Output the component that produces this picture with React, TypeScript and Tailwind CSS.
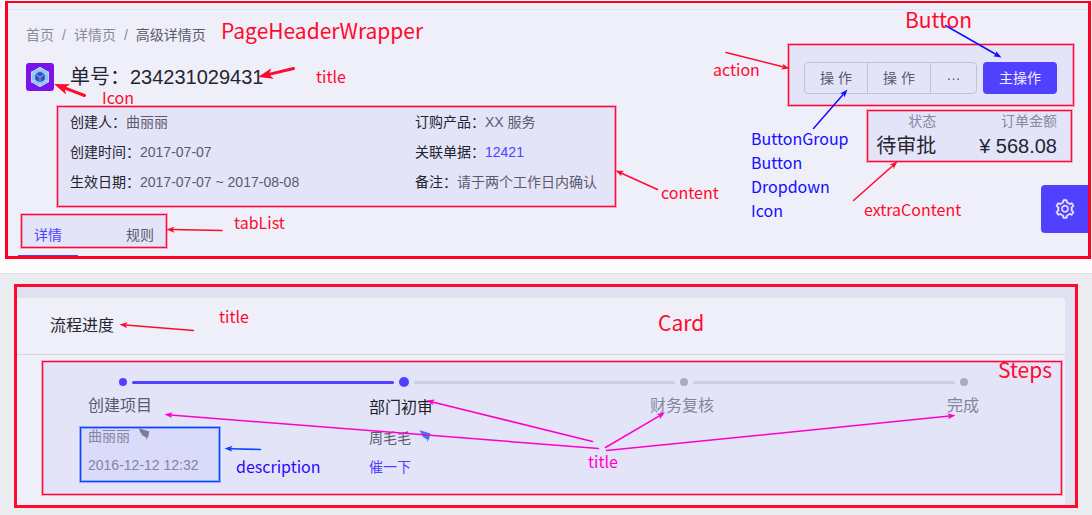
import React from "react";
import clsx from "clsx";

const RED = "#ff0a2d";
const BLUE = "#1010ff";
const PINK = "#ff00c8";

const redFrame =
  "border border-[#ff0a30] shadow-[0_0_0_1px_rgba(255,0,60,0.3),inset_0_0_0_1px_rgba(255,0,60,0.3)]";
const blueFrame =
  "border border-[#0a46ff] shadow-[0_0_0_1px_rgba(0,60,255,0.35),inset_0_0_0_1px_rgba(0,60,255,0.35)]";

type ArrowProps = {
  from: [number, number];
  to: [number, number];
  color: string;
  bold?: boolean;
};

function Arrow({ from, to, color, bold = false }: ArrowProps) {
  const dx = to[0] - from[0];
  const dy = to[1] - from[1];
  const len = Math.hypot(dx, dy);
  const ux = dx / len;
  const uy = dy / len;
  const head = bold ? 15 : 8;
  const half = bold ? 5.5 : 3;
  const notch = head * 0.75;
  const at = (back: number, side: number) =>
    `${to[0] - ux * back - uy * side},${to[1] - uy * back + ux * side}`;
  return (
    <g fill={color} stroke={color}>
      <line
        x1={from[0]}
        y1={from[1]}
        x2={to[0] - ux * notch}
        y2={to[1] - uy * notch}
        strokeWidth={bold ? 3 : 1.5}
        strokeLinecap="round"
      />
      <polygon
        points={[at(0, 0), at(head, half), at(notch, 0), at(head, -half)].join(" ")}
        stroke="none"
      />
    </g>
  );
}

const arrows: ArrowProps[] = [
  { from: [293.5, 68.5], to: [258, 77], color: RED, bold: true },
  { from: [84.5, 95.5], to: [54, 84], color: RED, bold: true },
  { from: [222, 230.5], to: [166.5, 229.5], color: RED },
  { from: [657.5, 189.5], to: [615.5, 170.5], color: RED },
  { from: [853.5, 200.5], to: [897.5, 161.5], color: RED },
  { from: [726, 52.5], to: [789.5, 68.5], color: RED },
  { from: [193.5, 330.5], to: [119.5, 324.5], color: RED },
  { from: [945.5, 25.5], to: [1001.5, 57.5], color: BLUE },
  { from: [813.5, 128.5], to: [847.5, 89.5], color: BLUE },
  { from: [260.5, 449.5], to: [224.5, 448.5], color: "#0a46ff" },
  { from: [592.5, 441.5], to: [426.5, 400.5], color: PINK },
  { from: [598.5, 448.5], to: [164.5, 414.5], color: PINK },
  { from: [605.5, 447.5], to: [665, 412.5], color: PINK },
  { from: [606.5, 450.5], to: [955.5, 415.5], color: PINK },
];

function Note({ className, children }: { className: string; children: React.ReactNode }) {
  return (
    <span
      className={clsx(
        "absolute whitespace-nowrap font-['Noto_Sans_CJK_SC',sans-serif]",
        className,
      )}
    >
      {children}
    </span>
  );
}

function Annotations() {
  return (
    <div className="pointer-events-none absolute inset-0 overflow-hidden">
      <svg className="absolute inset-0 h-full w-full" aria-hidden="true">
        {arrows.map((a, i) => (
          <Arrow key={i} {...a} />
        ))}
      </svg>
      <Note className="left-[221px] top-[14px] text-[21px] leading-8 text-[#ff0a2d]">PageHeaderWrapper</Note>
      <Note className="left-[905px] top-[3px] text-[21px] leading-8 text-[#ff0a2d]">Button</Note>
      <Note className="left-[658px] top-[306px] text-[21px] leading-8 text-[#ff0a2d]">Card</Note>
      <Note className="left-[998px] top-[353px] text-[21px] leading-8 text-[#ff0a2d]">Steps</Note>
      <Note className="left-[316px] top-[64px] text-base leading-6 text-[#ff0a2d]">title</Note>
      <Note className="left-[102px] top-[85px] text-base leading-6 text-[#ff0a2d]">Icon</Note>
      <Note className="left-[661px] top-[180px] text-base leading-6 text-[#ff0a2d]">content</Note>
      <Note className="left-[713px] top-[57px] text-base leading-6 text-[#ff0a2d]">action</Note>
      <Note className="left-[234px] top-[210px] text-base leading-6 text-[#ff0a2d]">tabList</Note>
      <Note className="left-[219px] top-[304px] text-base leading-6 text-[#ff0a2d]">title</Note>
      <Note className="left-[864px] top-[197px] text-base leading-6 text-[#ff0a2d]">extraContent</Note>
      <Note className="left-[236px] top-[454px] text-base leading-6 text-[#2a0aff]">description</Note>
      <Note className="left-[588px] top-[449px] text-base leading-6 text-[#ff00c8]">title</Note>
      <Note className="left-[751px] top-[126px] flex flex-col text-base leading-6 text-[#1010ff]">
        <span>ButtonGroup</span>
        <span>Button</span>
        <span>Dropdown</span>
        <span>Icon</span>
      </Note>
    </div>
  );
}

function Logo() {
  return (
    <svg className="size-7" viewBox="0 0 28 28" aria-hidden="true">
      <rect width="28" height="28" rx="3" fill="#7a14ea" />
      <polygon points="14,4 23,9 23,19 14,24 5,19 5,9" fill="#8cc4f6" />
      <path d="M14 4v5M5 9l5 2.5M23 9l-5 2.5M5 19l5-2.5M23 19l-5-2.5M14 24v-5" stroke="#b8dcfb" strokeWidth="1" />
      <polygon points="14,4.5 22.5,9.25 22.5,18.75 14,23.5 5.5,18.75 5.5,9.25" fill="none" stroke="#b4defc" strokeWidth="1" />
      <polygon points="14,8.5 18.8,11.2 18.8,16.8 14,19.5 9.2,16.8 9.2,11.2" fill="#3a4fc0" />
      <path d="M9.5 11.5L14 14l4.5-2.5M14 14v5" stroke="#8fc4f6" strokeWidth="0.8" fill="none" />
    </svg>
  );
}

function Gear() {
  return (
    <svg className="size-[22px]" viewBox="0 0 1024 1024" fill="currentColor" stroke="currentColor" strokeWidth="14" aria-hidden="true">
      <path d="M924.800 625.700l-65.500-56c3.100-19 4.700-38.400 4.700-57.800s-1.600-38.800-4.700-57.800l65.500-56a32.030 32.030 0 0 0 9.300-35.200l-.9-2.600a443.740 443.740 0 0 0-79.700-137.900l-1.800-2.100a32.120 32.120 0 0 0-35.100-9.500l-81.300 28.900c-30-24.600-63.500-44-99.700-57.600l-15.700-85a32.050 32.050 0 0 0-25.800-25.700l-2.700-.5c-52.100-9.400-106.900-9.400-159 0l-2.700.5a32.050 32.050 0 0 0-25.800 25.700l-15.800 85.400a351.860 351.860 0 0 0-99 57.400l-81.900-29.100a32 32 0 0 0-35.100 9.500l-1.800 2.100a446.020 446.020 0 0 0-79.700 137.900l-.9 2.600c-4.500 12.500-.8 26.500 9.300 35.200l66.300 56.600c-3.100 18.800-4.600 38-4.600 57.100 0 19.200 1.500 38.400 4.600 57.100L99 625.500a32.030 32.030 0 0 0-9.300 35.200l.9 2.600c18.100 50.400 44.900 96.900 79.700 137.900l1.800 2.100a32.120 32.120 0 0 0 35.100 9.500l81.900-29.100c29.800 24.500 63.100 43.900 99 57.400l15.800 85.400a32.050 32.050 0 0 0 25.800 25.700l2.700.5a449.400 449.400 0 0 0 159 0l2.700-.5a32.050 32.050 0 0 0 25.800-25.700l15.700-85a350 350 0 0 0 99.700-57.600l81.300 28.900a32 32 0 0 0 35.100-9.500l1.800-2.100c34.800-41.100 61.600-87.500 79.700-137.900l.9-2.600c4.500-12.300.8-26.300-9.300-35zM788.300 465.900c2.500 15.100 3.800 30.600 3.800 46.100s-1.300 31-3.800 46.100l-6.600 40.100 74.700 63.900a370.030 370.030 0 0 1-42.600 73.600L721 702.800l-31.400 25.800c-23.900 19.600-50.500 35-79.300 45.800l-38.100 14.300-17.900 97a377.500 377.500 0 0 1-85 0l-17.900-97.200-37.800-14.500c-28.500-10.800-55-26.200-78.700-45.700l-31.400-25.900-93.400 33.200c-17-22.900-31.200-47.600-42.600-73.600l75.500-64.500-6.500-40c-2.400-14.900-3.700-30.300-3.700-45.500 0-15.300 1.200-30.600 3.700-45.500l6.500-40-75.500-64.500c11.300-26.100 25.600-50.700 42.600-73.600l93.400 33.200 31.400-25.900c23.700-19.500 50.200-34.900 78.700-45.700l37.900-14.300 17.900-97.200c28.100-3.200 56.800-3.200 85 0l17.900 97 38.100 14.300c28.700 10.800 55.400 26.200 79.300 45.800l31.400 25.800 92.800-32.900c17 22.900 31.200 47.600 42.600 73.600L781.800 426l6.500 39.900zM512 326c-97.200 0-176 78.800-176 176s78.800 176 176 176 176-78.800 176-176-78.800-176-176-176zm79.200 255.200A111.600 111.600 0 0 1 512 614c-29.900 0-58-11.700-79.200-32.800A111.600 111.600 0 0 1 400 502c0-29.900 11.700-58 32.800-79.200C454 401.600 482.100 390 512 390c29.900 0 58 11.600 79.200 32.800A111.600 111.600 0 0 1 624 502c0 29.900-11.700 58-32.800 79.200z" />
    </svg>
  );
}

function Wing({ className }: { className: string }) {
  return (
    <svg className={clsx("h-3 w-3", className)} viewBox="0 0 12 12" fill="currentColor" aria-hidden="true">
      <path d="M0.800 0.300L10.800 3.200C11.500 3.500 11.500 4.200 11 5.200L10.200 7.200L11 7.600L8 12L8.300 9.300L6.500 8.900L6.800 8.200C5 8 4 7.300 3.400 6.200L4.200 5.900C2.800 5.300 2 4.300 1.700 3.200L2.400 3C1.500 2.400 0.900 1.500 0.800 0.300Z" />
    </svg>
  );
}

const facts: { label: string; value: string; link?: boolean }[] = [
  { label: "创建人", value: "曲丽丽" },
  { label: "订购产品", value: "XX 服务" },
  { label: "创建时间", value: "2017-07-07" },
  { label: "关联单据", value: "12421", link: true },
  { label: "生效日期", value: "2017-07-07 ~ 2017-08-08" },
  { label: "备注", value: "请于两个工作日内确认" },
];

function PageHeader() {
  return (
    <header className="border-b border-[#e0e0e3] bg-[#fcfcfc] pb-3.5 pl-[5px] pr-px pt-px">
      <div className="border-3 border-t-2 border-[#ff0022] bg-[#efeffa]">
        <div className="h-[7px] border-b border-[#e3e3ee]" />
        <div className="flex justify-between">
          <div className="min-w-0 flex-1 pt-3.5">
            <nav className="flex gap-2 pl-[18px] text-sm leading-[22px] text-[#8b8b98]">
              <a href="#home">首页</a>
              <span>/</span>
              <a href="#profile">详情页</a>
              <span>/</span>
              <span className="text-[#5a5a66]">高级详情页</span>
            </nav>
            <div className="mt-[17px] flex items-center gap-4 pl-[18px]">
              <Logo />
              <h1 className="text-xl leading-7 text-[#25252f]">单号：234231029431</h1>
            </div>
            <dl
              className={clsx(
                "ml-[49px] mt-[15px] grid max-w-[559px] grid-cols-[345px_auto] gap-y-2 bg-[#e4e4f9] pb-[13px] pl-3 pt-1 text-sm leading-[22px]",
                redFrame,
              )}
            >
              {facts.map((f) => (
                <div key={f.label} className="flex">
                  <dt className="text-[#23232f]">{f.label}：</dt>
                  <dd className="text-[#5a5a6b]">
                    {f.link ? (
                      <a href="#order" className="text-[#5040ff]">
                        {f.value}
                      </a>
                    ) : (
                      f.value
                    )}
                  </dd>
                </div>
              ))}
            </dl>
            <div
              role="tablist"
              className={clsx(
                "ml-[13px] mt-[7px] flex w-fit gap-16 bg-[#e4e4f9] px-3 pb-px pt-[9px] text-sm leading-[22px]",
                redFrame,
              )}
            >
              <button role="tab" aria-selected="true" className="text-[#5040ff]">
                详情
              </button>
              <button role="tab" aria-selected="false" className="text-[#5a5a6b]">
                规则
              </button>
            </div>
            <div className="ml-2.5 mt-[7px] h-px w-15 bg-[#5040ff]" />
          </div>

          <div className="flex flex-col items-end pt-[34px]">
            <div
              className={clsx(
                "mr-3.5 flex gap-1.5 bg-[#e4e4f9] pb-[11px] pl-[15px] pr-4 pt-[17px] text-sm",
                redFrame,
              )}
            >
              <div className="flex h-8 divide-x divide-[#c3c3d6] rounded border border-[#c3c3d6] text-[#5a5a6b]">
                <button className="w-[63px]">操 作</button>
                <button className="w-[63px]">操 作</button>
                <button className="w-[45px]" aria-label="更多">
                  ···
                </button>
              </div>
              <button className="h-8 w-[74px] rounded bg-[#5040ff] text-[#f0f0ff]">主操作</button>
            </div>
            <dl
              className={clsx(
                "mr-4 mt-1 flex gap-[43px] bg-[#e4e4f9] py-px pl-2 pr-3.5 text-right",
                redFrame,
              )}
            >
              <div className="flex flex-col gap-0.5">
                <dt className="text-sm leading-[18px] text-[#8888a0]">状态</dt>
                <dd className="text-xl leading-7 text-[#25252f]">待审批</dd>
              </div>
              <div className="flex flex-col gap-0.5">
                <dt className="text-sm leading-[18px] text-[#8888a0]">订单金额</dt>
                <dd className="text-xl leading-7 text-[#25252f]">¥ 568.08</dd>
              </div>
            </dl>
            <button
              aria-label="设置"
              className="mt-[23px] flex h-12 w-[47px] items-center justify-center rounded-l bg-[#5040ff] text-[#e8e8ff]"
            >
              <Gear />
            </button>
          </div>
        </div>
      </div>
    </header>
  );
}

function Dot({ className }: { className: string }) {
  return <span className={clsx("shrink-0 rounded-full", className)} />;
}

function Rail({ className }: { className: string }) {
  return <span className={clsx("mx-[5px] h-[3px] flex-1 rounded-sm", className)} />;
}

function ProgressCard() {
  return (
    <main className="pl-3.5 pr-3.5 pt-2.5">
      <section className="border-3 border-[#ff0a2d] bg-[#e0e1f1] pr-2.5 pt-[11px]">
        <div className="rounded-tr-sm bg-[#efeffa] pb-2.5">
          <h2 className="border-b border-[#d5d5e1] pb-4 pl-[33px] pt-4 text-base leading-6 text-[#25252f]">
            流程进度
          </h2>
          <div
            className={clsx("ml-[25px] mr-[3px] mt-1.5 bg-[#e4e4f9] px-px pb-3 pt-[15px]", redFrame)}
          >
            <div className="flex h-2.5 items-center pl-[75px] pr-[92px]">
              <Dot className="size-2 bg-[#5040ff]" />
              <Rail className="bg-[#5040ff]" />
              <Dot className="size-2.5 bg-[#5040ff]" />
              <Rail className="bg-[#cdcde2]" />
              <Dot className="size-2 bg-[#aaaac0]" />
              <Rail className="bg-[#cdcde2]" />
              <Dot className="size-2 bg-[#aaaac0]" />
            </div>
            <ol className="mt-[7px] flex pl-11 pr-[65px] text-sm leading-4">
              <li className="flex-1">
                <h3 className="text-base leading-6 text-[#5a5a6b]">创建项目</h3>
                <div
                  className={clsx(
                    "-ml-2 mt-[9px] flex w-35 flex-col gap-[13px] bg-[#dadafb] pb-2 pl-[7px] text-[#84849c]",
                    blueFrame,
                  )}
                >
                  <div className="flex items-start gap-2">
                    曲丽丽
                    <Wing className="text-[#7c7c96]" />
                  </div>
                  <div>2016-12-12 12:32</div>
                </div>
              </li>
              <li className="flex-1 pt-0.5">
                <h3 className="text-base leading-6 text-[#1c1c2a]">部门初审</h3>
                <div className="-ml-2 mt-[9px] flex w-35 flex-col gap-[13px] border border-transparent pl-[7px] text-[#5a5a6b]">
                  <div className="flex items-start gap-2">
                    周毛毛
                    <Wing className="text-[#3a78ee]" />
                  </div>
                  <a href="#urge" className="text-[#5040ff]">
                    催一下
                  </a>
                </div>
              </li>
              <li className="flex-1">
                <h3 className="text-base leading-6 text-[#84849c]">财务复核</h3>
              </li>
              <li className="w-16 text-center">
                <h3 className="text-base leading-6 text-[#84849c]">完成</h3>
              </li>
            </ol>
          </div>
        </div>
      </section>
    </main>
  );
}

export default function App() {
  return (
    <div className="relative min-h-screen bg-[#ebecf0] font-['Liberation_Sans','Noto_Sans_CJK_SC',sans-serif]">
      <PageHeader />
      <ProgressCard />
      <Annotations />
    </div>
  );
}
